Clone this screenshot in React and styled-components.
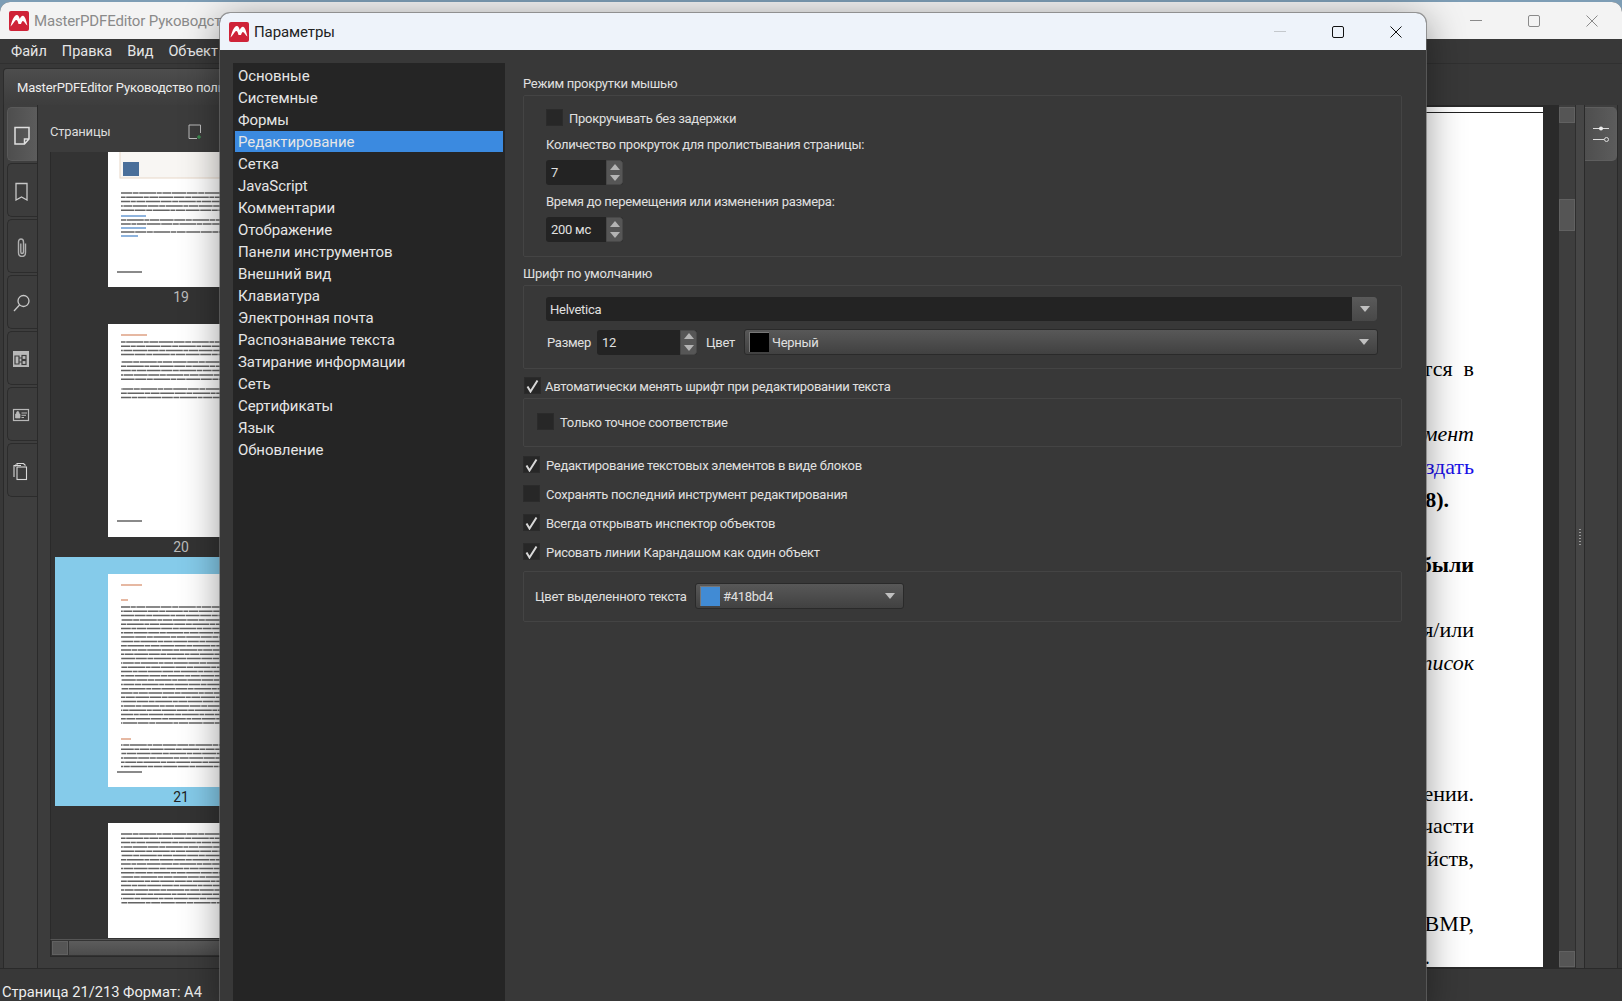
import React from 'react';
import styled, { createGlobalStyle } from 'styled-components';

const GlobalStyle = createGlobalStyle`
  html, body { margin: 0; padding: 0; background: #7d9db5; overflow: hidden; }
  * { box-sizing: border-box; }
  body { font-family: Roboto, "Noto Sans", sans-serif; }
`;

const settingsPages = [
  'Основные', 'Системные', 'Формы', 'Редактирование', 'Сетка', 'JavaScript', 'Комментарии',
  'Отображение', 'Панели инструментов', 'Внешний вид', 'Клавиатура', 'Электронная почта',
  'Распознавание текста', 'Затирание информации', 'Сеть', 'Сертификаты', 'Язык', 'Обновление',
];

// only what is seen of the page beside the dialog
const docLines = [
  { text: 'тся  в' }, {}, { text: 'мент', italic: true }, { text: 'здать', link: true },
  { text: '8).', bold: true, inset: 25 }, {}, { text: 'были', bold: true }, {}, { text: 'я/или' },
  { text: 'писок', italic: true }, {}, {}, {}, { text: 'ении.' }, { text: 'части' },
  { text: 'йств,' }, {}, { text: 'BMP,' }, { text: '.', inset: 44 },
];

const Desktop = styled.div`
  position: relative;
  width: 1622px;
  height: 1001px;
  padding-top: 2px;
  overflow: hidden;
`;

const MainWindow = styled.div`
  display: flex;
  flex-direction: column;
  height: 999px;
  background: #383838;
  border-radius: 10px 10px 0 0;
  overflow: hidden;
`;

const TitleBar = styled.div`
  display: flex;
  align-items: center;
  flex: none;
  height: 37px;
  padding-left: 9px;
  background: ${(p) => (p.$dialog ? '#eef3fa' : '#f3f3f3')};
  color: ${(p) => (p.$dialog ? '#222' : '#8a8a8a')};
  font-size: 15px;
  letter-spacing: ${(p) => (p.$dialog ? '-0.1px' : '-0.15px')};
`;

const TitleText = styled.span`
  margin-left: 5px;
  white-space: nowrap;
`;

const WindowButtons = styled.div`
  display: flex;
  margin-left: auto;
  margin-right: 24px;
  gap: 46px;
`;

const MenuBar = styled.div`
  display: flex;
  align-items: center;
  flex: none;
  height: 24px;
  padding-left: 11px;
  gap: 15px;
  color: #e6e6e6;
  font-size: 14.5px;
`;

const TabRow = styled.div`
  flex: none;
  height: 42px;
  padding: 4px 0 0 3px;
  border-top: 1px solid #303030;
`;

const DocTab = styled.div`
  display: flex;
  align-items: center;
  width: 340px;
  height: 37px;
  padding-left: 13px;
  background: linear-gradient(#4d4d4d, #3d3d3d);
  border: 1px solid #2c2c2c;
  border-bottom: none;
  border-radius: 4px 4px 0 0;
  color: #eee;
  font-size: 13px;
  letter-spacing: -0.17px;
  white-space: nowrap;
`;

const Workspace = styled.div`
  display: flex;
  flex: 1;
  min-height: 0;
  padding: 0 4px 0 3px;
  border-bottom: 1px solid #2a2a2a;
`;

const Rail = styled.div`
  display: flex;
  flex-direction: column;
  flex: none;
  width: ${(p) => (p.$right ? '34px' : '35px')};
  padding-top: 2px;
  background: #3e3e3e;
  border-left: 1px solid #2a2a2a;
  border-right: 1px solid #2a2a2a;
`;

const RailButton = styled.div`
  display: flex;
  align-items: center;
  justify-content: center;
  flex: none;
  height: 54px;
  margin: 0 0 2px 3px;
  background: ${(p) => (p.$active ? 'linear-gradient(90deg, #4e4e4e, #5c5c5c)' : '#3c3c3c')};
  border: 1px solid ${(p) => (p.$active ? '#5a5a5a' : '#2c2c2c')};
  border-right: none;
  border-radius: 5px 0 0 5px;
  ${(p) => p.$right && 'margin: 0; border-radius: 0 5px 5px 0; border: 1px solid #5e5e5e; border-left: none;'}
`;

const PagesPanel = styled.div`
  display: flex;
  flex-direction: column;
  flex: none;
  width: 290px;
  padding: 0 13px 11px 12px;
  background: #3c3c3c;
`;

const PanelHeader = styled.div`
  display: flex;
  align-items: center;
  flex: none;
  height: 47px;
  padding-top: 6px;
  color: #ddd;
  font-size: 13px;
  letter-spacing: -0.2px;
`;

const PanelTitle = styled.span`
  flex: none;
  width: 138px;
`;

const ThumbList = styled.div`
  flex: 1;
  min-height: 0;
  overflow: hidden;
  background: #333;
  border-left: 1px solid #2a2a2a;
`;

const ThumbItem = styled.div`
  display: flex;
  flex-direction: column;
  align-items: center;
  margin: 0 4px;
  padding-top: ${(p) => (p.$first ? 0 : 17)}px;
  background: ${(p) => (p.$selected ? '#85cbea' : 'transparent')};
`;

const ThumbPage = styled.svg`
  display: block;
  flex: none;
  background: #fff;
`;

const ThumbLabel = styled.div`
  height: ${(p) => (p.$selected ? 19 : 20)}px;
  margin-right: 4px;
  line-height: 20px;
  color: ${(p) => (p.$selected ? '#222' : '#bbb')};
  font-size: 14px;
`;

const HScroll = styled.div`
  display: flex;
  flex: none;
  height: 18px;
  gap: 1px;
  padding: 1px;
  background: #333;
  border: 1px solid #2a2a2a;
  border-top-color: #555;
`;

const ScrollButton = styled.div`
  flex: none;
  width: ${(p) => (p.$v ? '100%' : '16px')};
  height: ${(p) => (p.$v ? (p.$h ? `${p.$h}px` : '16px') : '100%')};
  background: #555;
  border: 1px solid #616161;
`;

const HThumb = styled.div`
  flex: 1;
  background: linear-gradient(#5c5c5c, #4c4c4c);
`;

const DocArea = styled.div`
  flex: 1;
  min-width: 0;
  padding: 2px 16px 0 0;
  overflow: hidden;
  background: #2a2a2a;
`;

const DocPage = styled.div`
  position: relative;
  height: 860px;
  padding: 246px 69px 0 0;
  background: #fff;
  font-family: "Liberation Serif", serif;
  font-size: 22px;
  line-height: 32.67px;
  color: #000;
  text-align: right;
`;

const DocRule = styled.div`
  position: absolute;
  top: 5px;
  left: 0;
  right: 0;
  height: 1px;
  background: #222;
`;

const DocLine = styled.div`
  height: 32.67px;
  margin-right: ${(p) => p.$inset || 0}px;
  font-style: ${(p) => (p.$italic ? 'italic' : 'normal')};
  font-weight: ${(p) => (p.$bold ? 700 : 400)};
  color: ${(p) => (p.$link ? '#1a10e8' : '#000')};
  white-space: pre;
`;

const VScroll = styled.div`
  display: flex;
  flex-direction: column;
  justify-content: space-between;
  flex: none;
  width: 17px;
  padding: 2px 0 1px;
  background: #3e3e3e;
  border-right: 1px solid #2e2e2e;
  position: relative;
`;

const VThumb = styled(ScrollButton)`
  position: absolute;
  top: 94px;
  left: 0;
  width: 16px;
`;

const Splitter = styled.div`
  display: flex;
  align-items: center;
  justify-content: center;
  flex: none;
  width: 8px;
  background: #464646;
`;

const SplitterDots = styled.div`
  width: 2px;
  height: 16px;
  background: repeating-linear-gradient(#9a9a9a 0 1.5px, transparent 1.5px 3px);
`;

const StatusBar = styled.div`
  display: flex;
  align-items: center;
  flex: none;
  height: 32px;
  padding: 13px 0 0 2px;
  color: #eee;
  font-size: 14.7px;
`;

const Dialog = styled.div`
  position: absolute;
  top: 13px;
  left: 220px;
  width: 1206px;
  height: 1000px;
  display: flex;
  flex-direction: column;
  background: #383838;
  border-radius: 10px 10px 0 0;
  box-shadow: 0 0 0 1px rgba(110, 110, 110, 0.65), 0 6px 38px rgba(0, 0, 0, 0.42);
  overflow: hidden;
`;

const DialogBody = styled.div`
  display: flex;
  flex: 1;
  min-height: 0;
  padding: 13px 0 0 13px;
`;

const SideList = styled.div`
  flex: none;
  width: 272px;
  padding: 2px;
  background: #252525;
`;

const SideItem = styled.div`
  height: 22px;
  padding-left: 3px;
  line-height: 23px;
  color: #e6e6e6;
  font-size: 15px;
  letter-spacing: -0.08px;
  ${(p) => p.$selected && 'padding-top: 1px; line-height: 21px; background: #3b8ae0; border-bottom: 1px solid #252525; background-clip: padding-box;'}
`;

const Settings = styled.div`
  display: flex;
  flex-direction: column;
  flex: none;
  width: 879px;
  margin-left: 18px;
  margin-top: -13px;
  padding-top: 23px;
  color: #e0e0e0;
  font-size: 13px;
  letter-spacing: -0.27px;
`;

const GroupTitle = styled.div`
  height: 20px;
  margin-bottom: 2px;
  margin-top: ${(p) => p.$mt || 0}px;
  line-height: 22px;
`;

const Group = styled.div`
  display: flex;
  flex-direction: column;
  align-items: flex-start;
  height: ${(p) => p.$h}px;
  margin-top: ${(p) => p.$mt || 0}px;
  padding: ${(p) => p.$pad};
  border: 1px solid #444;
  border-radius: 2px;
`;

const CheckRow = styled.label`
  display: flex;
  align-items: center;
  flex: none;
  height: 17px;
  gap: ${(p) => p.$gap || 6}px;
  margin-top: ${(p) => p.$mt || 0}px;
  margin-left: ${(p) => p.$ml || 0}px;
  white-space: nowrap;
`;

const CheckText = styled.span`
  padding-top: 2px;
`;

const Box = styled.span`
  display: flex;
  align-items: center;
  justify-content: center;
  flex: none;
  width: 17px;
  height: 17px;
  background: #272727;
  border: 1px solid #2b2b2b;
`;

const FieldLabel = styled.div`
  height: 20px;
  margin-top: ${(p) => p.$mt || 0}px;
  line-height: 20px;
`;

const Spin = styled.div`
  display: flex;
  flex: none;
  width: ${(p) => p.$w}px;
  height: 25px;
  margin-top: ${(p) => p.$mt || 0}px;
  background: #232323;
  border-radius: 3px;
  overflow: hidden;
`;

const SpinValue = styled.div`
  flex: 1;
  padding-left: 5px;
  line-height: 26px;
`;

const SpinArrows = styled.div`
  display: flex;
  flex-direction: column;
  flex: none;
  width: 17px;
  background: #565656;
  border: 1px solid #484848;
  border-radius: 0 3px 3px 0;
`;

const SpinArrow = styled.div`
  flex: 1;
  display: flex;
  align-items: center;
  justify-content: center;
  &::after {
    content: '';
    border-left: 5px solid transparent;
    border-right: 5px solid transparent;
    ${(p) => (p.$up ? 'border-bottom: 6px solid #b4b4b4;' : 'border-top: 6px solid #b4b4b4;')}
  }
`;

const FontRow = styled.div`
  display: flex;
  align-items: center;
  width: 100%;
  margin-top: ${(p) => p.$mt || 0}px;
`;

const FontName = styled.div`
  display: flex;
  flex: none;
  width: 100%;
  height: 24px;
  background: #232323;
  border-radius: 3px;
  overflow: hidden;
`;

const FontNameText = styled.div`
  flex: 1;
  padding-left: 4px;
  line-height: 26px;
`;

const ComboArrowBox = styled.div`
  display: flex;
  align-items: center;
  justify-content: center;
  flex: none;
  width: 25px;
  background: linear-gradient(#5a5a5a, #484848);
`;

const Caret = styled.span`
  border-left: 5px solid transparent;
  border-right: 5px solid transparent;
  border-top: 6px solid #c0c0c0;
`;

const Combo = styled.div`
  display: flex;
  align-items: center;
  flex: none;
  width: ${(p) => p.$w}px;
  height: 26px;
  padding: 0 8px 0 4px;
  background: linear-gradient(#585858, #414141);
  border: 1px solid #2a2a2a;
  border-radius: 3px;
`;

const Swatch = styled.span`
  flex: none;
  width: 20px;
  height: 20px;
  margin-right: 3px;
  background: ${(p) => p.$color};
  border-left: 1px solid #777;
  border-top: 1px solid #777;
`;

const ComboText = styled.span`
  flex: 1;
  padding-top: 1px;
`;

const InlineLabel = styled.span`
  flex: none;
  width: ${(p) => p.$w}px;
  padding-left: ${(p) => p.$pl || 0}px;
  padding-top: 1px;
  white-space: nowrap;
`;

const Logo = () => (
  <svg width="20" height="20" viewBox="0 0 20 20" style={{ flex: 'none' }}>
    <rect width="20" height="20" rx="2" fill="#cf2338" />
    <path d="M1.5 15.5 C3 10 4.5 5 7.5 4 C9.5 3.8 10 6 10.8 8 C11.5 6 13 4.4 14.5 5 C16.5 6 17.5 11 18.5 14.5 C16.5 13.5 15.5 10.5 14 10 C13 10 12.5 11.5 12 13 L9.5 13 C9 11 8.5 9 7.2 9 C5.5 9.5 3.5 14 1.5 15.5 Z" fill="#fff" />
  </svg>
);

const Controls = ({ dark }) => {
  const stroke = dark ? '#111' : '#8a8a8a';
  return (
    <WindowButtons>
      <svg width="12" height="12" viewBox="0 0 12 12">
        <path d="M0 5.5H12" stroke={dark ? '#c4c8cc' : '#8a8a8a'} strokeWidth="1" />
      </svg>
      <svg width="12" height="12" viewBox="0 0 12 12">
        <rect x=".5" y=".5" width="11" height="11" rx="1.5" fill="none" stroke={stroke} strokeWidth="1" />
      </svg>
      <svg width="12" height="12" viewBox="0 0 12 12">
        <path d="M.5 .5L11.5 11.5M11.5 .5L.5 11.5" stroke={stroke} strokeWidth="1" />
      </svg>
    </WindowButtons>
  );
};

const railIcons = [
  <path key="p" d="M4 2.5H18V14L13.5 19H4ZM13.5 19V14H18" fill="none" stroke="#e0e0e0" strokeWidth="1.5" />,
  <path key="b" d="M5 2.5H16V19L10.5 16L5 19Z" fill="none" stroke="#c8c8c8" strokeWidth="1.3" />,
  <path key="c" d="M14.5 6.5V15.5C14.5 18 13 19.5 11 19.5C9 19.5 7.5 18 7.5 15.5V5C7.5 3.2 8.6 2 10 2C11.4 2 12.5 3.2 12.5 5V15C12.5 15.8 11.8 16.5 11 16.5C10.2 16.5 9.8 15.8 9.8 15V6.5" fill="none" stroke="#b0b0b0" strokeWidth="1.4" />,
  <g key="s" fill="none" stroke="#c8c8c8" strokeWidth="1.3"><circle cx="12.5" cy="8" r="5.5" /><path d="M8.5 12L3 18" /></g>,
  <g key="l"><rect x="2" y="2" width="16" height="16" fill="#b8b8b8" /><path d="M4 7H8V15H4ZM8 9H11M8 13H11" fill="none" stroke="#3c3c3c" strokeWidth="1.2" /><rect x="11" y="6.5" width="4" height="4" fill="none" stroke="#3c3c3c" strokeWidth="1.2" /><rect x="11" y="11.5" width="4" height="4" fill="none" stroke="#3c3c3c" strokeWidth="1.2" /></g>,
  <g key="i"><rect x="2.5" y="4.5" width="15" height="11" fill="none" stroke="#b8b8b8" strokeWidth="1.2" /><path d="M4.5 9H9V13H4.5ZM5.5 9V7.8C5.5 6 8 6 8 7.8V9" fill="#b8b8b8" stroke="#b8b8b8" strokeWidth=".7" /><path d="M10.5 8H16M10.5 10.3H15M10.5 12.5H13" stroke="#b8b8b8" strokeWidth="1" /></g>,
  <g key="d" fill="none" stroke="#d8d8d8" strokeWidth="1.1"><path d="M6 4V2.5H12.5L14.5 4.5" /><path d="M4.5 5.5V3.5M3 16V4.5H10" /><rect x="6" y="6" width="9.5" height="12.5" fill="#3c3c3c" /></g>,
];

// greeked text of a thumbnail: [y, x, width, colour]
const rows = (from, to, step) => {
  const out = [];
  for (let y = from; y <= to; y += step) out.push([y, 13, 137, '#222']);
  return out;
};

const thumbs = [
  {
    n: 19, height: 135, first: true,
    lines: [...rows(41, 60, 4.3), [64, 13, 25, '#2a6fc0'], [68, 13, 137, '#222'], [72, 13, 137, '#222'], [76, 13, 25, '#2a6fc0'], [80, 13, 137, '#222'], [84, 13, 17, '#2a6fc0'], [120, 9, 25, '#222']],
    image: true,
  },
  {
    n: 20, height: 213,
    lines: [[11, 13, 26, '#d07a50'], ...rows(18, 31, 4.2), ...rows(38, 56, 4.3), ...rows(65, 74, 4.3), [197, 9, 25, '#222']],
  },
  {
    n: 21, height: 213, selected: true,
    lines: [[11, 13, 21, '#d07a50'], [26, 13, 7, '#d07a50'], ...rows(33, 150, 4.3), [165, 13, 10, '#d07a50'], ...rows(171, 193, 4.3), [198, 9, 25, '#222']],
  },
  {
    n: 22, height: 115, noLabel: true,
    lines: rows(11, 84, 4.3),
  },
];

const Thumb = ({ item }) => (
  <ThumbItem $first={item.first} $selected={item.selected}>
    <ThumbPage width="150" height={item.height} viewBox={`0 0 150 ${item.height}`}>
      {item.image && (
        <g>
          <rect x="12" y="-1" width="140" height="27" fill="#f8f6f3" stroke="#e8d8c8" />
          <rect x="15" y="10" width="16" height="14" fill="#4a6f9a" />
        </g>
      )}
      {item.lines.map(([y, x, w, c], i) => (
        <line
          key={i}
          x1={x}
          x2={x + w}
          y1={y}
          y2={y}
          stroke={c}
          strokeWidth="1.5"
          strokeDasharray={w > 40 ? '11 .6 6 .6 17 .6 5 .6 9 .6 14 .6' : undefined}
          strokeDashoffset={i * 13}
          opacity="0.7"
        />
      ))}
    </ThumbPage>
    {!item.noLabel && <ThumbLabel $selected={item.selected}>{item.n}</ThumbLabel>}
  </ThumbItem>
);

const CheckMark = () => (
  <svg width="13" height="14" viewBox="0 0 13 14">
    <path d="M1.5 7.5L4.5 12.5L11.5 1.5" fill="none" stroke="#d8d8d8" strokeWidth="2" />
  </svg>
);

const Check = ({ checked, children, ...rest }) => (
  <CheckRow {...rest}>
    <Box>{checked && <CheckMark />}</Box>
    <CheckText>{children}</CheckText>
  </CheckRow>
);

const SpinBox = ({ value, w, mt }) => (
  <Spin $w={w} $mt={mt}>
    <SpinValue>{value}</SpinValue>
    <SpinArrows>
      <SpinArrow $up />
      <SpinArrow />
    </SpinArrows>
  </Spin>
);

export default function App() {
  return (
    <>
      <GlobalStyle />
      <Desktop>
        <MainWindow>
          <TitleBar>
            <Logo />
            <TitleText>MasterPDFEditor Руководст</TitleText>
            <Controls />
          </TitleBar>
          <MenuBar>
            <span>Файл</span>
            <span>Правка</span>
            <span>Вид</span>
            <span>Объект</span>
          </MenuBar>
          <TabRow>
            <DocTab>MasterPDFEditor Руководство поль</DocTab>
          </TabRow>
          <Workspace>
            <Rail>
              {railIcons.map((icon, i) => (
                <RailButton key={i} $active={i === 0}>
                  <svg width="22" height="22" viewBox="1 -2 22 22">{icon}</svg>
                </RailButton>
              ))}
            </Rail>
            <PagesPanel>
              <PanelHeader>
                <PanelTitle>Страницы</PanelTitle>
                <svg width="14" height="16" viewBox="0 0 14 16">
                  <path d="M1 1H12.5V9M9 14.5H1V1" fill="none" stroke="#bbb" strokeWidth="1" />
                  <path d="M11 11V15M9 13H13" stroke="#3aa655" strokeWidth="1" />
                </svg>
              </PanelHeader>
              <ThumbList>
                {thumbs.map((t) => <Thumb key={t.n} item={t} />)}
              </ThumbList>
              <HScroll>
                <ScrollButton />
                <HThumb />
              </HScroll>
            </PagesPanel>
            <DocArea>
              <DocPage>
                <DocRule />
                {docLines.map((line, i) => (
                  <DocLine
                    key={i}
                    $italic={line.italic}
                    $bold={line.bold}
                    $link={line.link}
                    $inset={line.inset}
                  >
                    {line.text}
                  </DocLine>
                ))}
              </DocPage>
            </DocArea>
            <VScroll>
              <ScrollButton $v />
              <VThumb $v $h={32} />
              <ScrollButton $v />
            </VScroll>
            <Splitter><SplitterDots /></Splitter>
            <Rail $right>
              <RailButton $right $active>
                <svg width="18" height="16" viewBox="0 0 18 16">
                  <path d="M1 2.5H17M1 13.5H12" stroke="#ddd" strokeWidth="1" />
                  <circle cx="9" cy="2.5" r="2" fill="#eee" />
                  <circle cx="14.5" cy="13.5" r="2" fill="#555" stroke="#ddd" strokeWidth="1" />
                </svg>
              </RailButton>
            </Rail>
          </Workspace>
          <StatusBar>Страница 21/213 Формат: А4</StatusBar>
        </MainWindow>

        <Dialog>
          <TitleBar $dialog>
            <Logo />
            <TitleText>Параметры</TitleText>
            <Controls dark />
          </TitleBar>
          <DialogBody>
            <SideList>
              {settingsPages.map((name) => (
                <SideItem key={name} $selected={name === 'Редактирование'}>{name}</SideItem>
              ))}
            </SideList>
            <Settings>
              <GroupTitle>Режим прокрутки мышью</GroupTitle>
              <Group $h={162} $pad="13px 22px">
                <Check>Прокручивать без задержки</Check>
                <FieldLabel $mt={9}>Количество прокруток для пролистывания страницы:</FieldLabel>
                <SpinBox value="7" w={77} mt={5} />
                <FieldLabel $mt={7}>Время до перемещения или изменения размера:</FieldLabel>
                <SpinBox value="200 мс" w={77} mt={5} />
              </Group>
              <GroupTitle $mt={6}>Шрифт по умолчанию</GroupTitle>
              <Group $h={84} $pad="11px 24px 0 22px">
                <FontName>
                  <FontNameText>Helvetica</FontNameText>
                  <ComboArrowBox><Caret /></ComboArrowBox>
                </FontName>
                <FontRow $mt={8}>
                  <InlineLabel $w={51} $pl={1}>Размер</InlineLabel>
                  <SpinBox value="12" w={100} />
                  <InlineLabel $w={47} $pl={9}>Цвет</InlineLabel>
                  <Combo $w={634}>
                    <Swatch $color="#000" />
                    <ComboText>Черный</ComboText>
                    <Caret />
                  </Combo>
                </FontRow>
              </Group>
              <Check checked $mt={8} $ml={1} $gap={4}>Автоматически менять шрифт при редактировании текста</Check>
              <Group $h={49} $mt={4} $pad="14px 13px">
                <Check>Только точное соответствие</Check>
              </Group>
              <Check checked $mt={9}>Редактирование текстовых элементов в виде блоков</Check>
              <Check $mt={12}>Сохранять последний инструмент редактирования</Check>
              <Check checked $mt={12}>Всегда открывать инспектор объектов</Check>
              <Check checked $mt={12}>Рисовать линии Карандашом как один объект</Check>
              <Group $h={51} $mt={11} $pad="11px">
                <FontRow>
                  <InlineLabel $w={160}>Цвет выделенного текста</InlineLabel>
                  <Combo $w={209}>
                    <Swatch $color="#418bd4" />
                    <ComboText>#418bd4</ComboText>
                    <Caret />
                  </Combo>
                </FontRow>
              </Group>
            </Settings>
          </DialogBody>
        </Dialog>
      </Desktop>
    </>
  );
}
